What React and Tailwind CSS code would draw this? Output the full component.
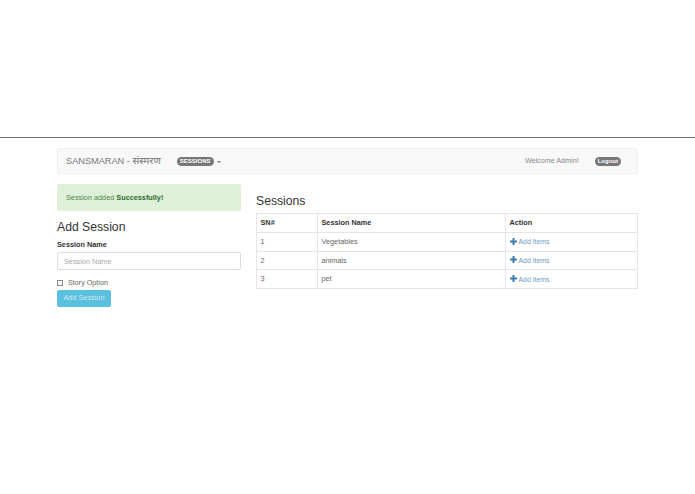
const F = { fontFamily: '"Liberation Sans", "Noto Sans", "Noto Sans CJK SC", sans-serif' };
const rows = [["1", "Vegetables"], ["2", "animals"], ["3", "pet"]];

function Plus() {
  return (
    <svg width="7" height="7" viewBox="0 0 7 7" className="mr-[2px] inline-block align-[-0.5px]">
      <path d="M2.5 0h2v2.5H7v2H4.5V7h-2V4.5H0v-2h2.5z" fill="#3f7cae" />
    </svg>
  );
}

export default function App() {
  return (
    <div style={F} className="h-[494px] w-[695px] overflow-hidden bg-white text-[7.3px] text-[#333]">
      <div className="h-[138px] border-b border-[#777]" />
      <div className="px-[57px] pt-[10px]">
        <nav className="flex h-[26px] w-[581px] items-center rounded-[2px] border border-[#efefef] bg-[#f8f8f8] pl-[8px] pr-[16px]">
          <span className="text-[9.2px] text-[#777]">SANSMARAN - <span className="text-[10.2px]">संस्मरण</span></span>
          <span className="ml-[16px] rounded-full bg-[#777] px-[3px] py-[1px] text-[6px] font-bold leading-[7px] text-white">SESSIONS</span>
          <span className="ml-[3px] mt-[1px] h-0 w-0 border-x-[2px] border-t-[2px] border-x-transparent border-t-[#777]" />
          <span className="ml-auto text-[7.2px] text-[#888]">Welcome Admin!</span>
          <span className="ml-[16px] rounded-full bg-[#777] px-[3px] py-[1px] text-[6px] font-bold leading-[7px] text-white">Logout</span>
        </nav>
        <div className="mt-[10px] flex items-start">
          <div className="w-[184px]">
            <div className="flex h-[27px] items-center rounded-[2px] border border-[#dff0d8] bg-[#dff0d8] pl-[8px] pt-[1px] text-[#4f8450]">
              <span>Session added <b className="text-[#2f6b30]">Successfully!</b></span>
            </div>
            <h3 className="mt-[9px] text-[12.2px] leading-[15px]">Add Session</h3>
            <label className="mt-[5px] block text-[7.3px] font-bold leading-[10px]">Session Name</label>
            <input
              readOnly
              placeholder="Session Name"
              className="mt-[2px] block h-[18px] w-full rounded-[2px] border border-[#ddd] px-[6px] text-[7.3px] placeholder:text-[#aaa]"
            />
            <div className="mt-[8px] flex h-[10px] items-center text-[#666]">
              <span className="h-[6px] w-[6px] border border-[#888] bg-white" />
              <span className="ml-[5px] text-[7.2px]">Story Option</span>
            </div>
            <button className="mt-[2px] block h-[17px] w-[54px] rounded-[2px] border border-[#5bc0de] bg-[#5bc0de] text-[7.3px] text-[#cfeaf4]">Add Session</button>
          </div>
          <div className="ml-[15px] w-[381.5px]">
            <h3 className="mt-[9px] text-[12.2px] leading-[16px]">Sessions</h3>
            <table className="mt-[4px] w-full table-fixed border-collapse border border-[#e6e6e6]">
              <thead>
                <tr className="h-[19px] text-left font-bold">
                  <th className="w-[61px] border border-[#e6e6e6] pl-[3.5px] pt-[1px]">SN#</th>
                  <th className="w-[188px] border border-[#e6e6e6] pl-[3.5px] pt-[1px]">Session Name</th>
                  <th className="border border-[#e6e6e6] pl-[3.5px] pt-[1px]">Action</th>
                </tr>
              </thead>
              <tbody>
                {rows.map(([n, name]) => (
                  <tr key={n} className="h-[18.7px] text-[#666]">
                    <td className="border border-[#e6e6e6] pl-[3.5px] pt-[1px]">{n}</td>
                    <td className="border border-[#e6e6e6] pl-[3.5px] pt-[1px]">{name}</td>
                    <td className="border border-[#e6e6e6] pl-[3.5px] pt-[1px] text-[6.9px] text-[#6f9cc0]"><Plus />Add Items</td>
                  </tr>
                ))}
              </tbody>
            </table>
          </div>
        </div>
      </div>
    </div>
  );
}
